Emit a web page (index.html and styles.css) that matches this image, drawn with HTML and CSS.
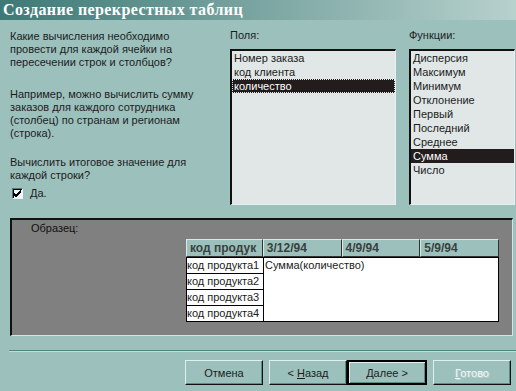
FILE: index.html
```html
<!DOCTYPE html>
<html lang="ru">
  <head>
    <meta charset="UTF-8">
    <link rel="stylesheet" href="styles.css">
    <title>Создание перекрестных таблиц</title>
  </head>
  <body>

    <div class="titleBar">Создание перекрестных таблиц</div>

    <div class="mainRow">
      <div class="textCol">
        <p class="para">Какие вычисления необходимо<br>провести для каждой ячейки на<br>пересечении строк и столбцов?</p>
        <p class="para second">Например, можно вычислить сумму<br>заказов для каждого сотрудника<br>(столбец) по странам и регионам<br>(строка).</p>
        <p class="para third">Вычислить итоговое значение для<br>каждой строки?</p>
        <div class="checkRow">
          <span class="checkBox">
            <svg width="9" height="9" viewBox="0 0 9 9"><path d="M1 4 L3 6 L8 1 M1 5 L3 7 L8 2 M1 6 L3 8 L8 3" stroke="#000" stroke-width="1" fill="none"/></svg>
          </span>
          <span>Да.</span>
        </div>
      </div>

      <div class="fieldsCol">
        <div class="label">Поля:</div>
        <div class="listBox">
          <div class="item">Номер заказа</div>
          <div class="item">код клиента</div>
          <div class="item selected focused">количество</div>
        </div>
      </div>

      <div class="funcCol">
        <div class="label">Функции:</div>
        <div class="listBox">
          <div class="item">Дисперсия</div>
          <div class="item">Максимум</div>
          <div class="item">Минимум</div>
          <div class="item">Отклонение</div>
          <div class="item">Первый</div>
          <div class="item">Последний</div>
          <div class="item">Среднее</div>
          <div class="item selected">Сумма</div>
          <div class="item">Число</div>
        </div>
      </div>
    </div>

    <div class="samplePanel">
      <div class="sampleLabel">Образец:</div>
      <div class="sampleTable">
        <div class="headRow">
          <div class="headCell first">код продук</div>
          <div class="headCell">3/12/94</div>
          <div class="headCell">4/9/94</div>
          <div class="headCell">5/9/94</div>
        </div>
        <div class="bodyPart">
          <div class="rowHeads">
            <div class="rowCell">код продукта1</div>
            <div class="rowCell">код продукта2</div>
            <div class="rowCell">код продукта3</div>
            <div class="rowCell">код продукта4</div>
          </div>
          <div class="dataArea">Сумма(количество)</div>
        </div>
      </div>
    </div>

    <div class="separator"></div>

    <div class="buttonRow">
      <button class="winButton">Отмена</button>
      <button class="winButton back">&lt; <u>Н</u>азад</button>
      <button class="winButton default"><u>Д</u>алее &gt;</button>
      <button class="winButton disabled"><u>Г</u>отово</button>
    </div>

  </body>
</html>
```

FILE: styles.css
```css
body {
  margin: 0;
  width: 516px;
  height: 391px;
  overflow: hidden;
  background: #9cc0bc;
  font-family: "Liberation Sans", Arial, sans-serif;
  font-size: 11px;
  color: #1c1c1c;
}

.titleBar {
  height: 20px;
  line-height: 19px;
  padding-left: 3px;
  background: linear-gradient(to right, #3d7976, #b7d1cd);
  color: #fff;
  font-family: "Liberation Serif", serif;
  font-weight: bold;
  font-size: 16px;
  letter-spacing: 0.4px;
  white-space: nowrap;
}

.mainRow {
  display: flex;
  padding-top: 9px;
  height: 176px;
}

.textCol {
  flex: none;
  width: 210px;
  padding-left: 10px;
  padding-right: 10px;
  padding-top: 1px;
}

.para {
  margin: 0;
  line-height: 13px;
}

.second {
  margin-top: 19px;
}

.third {
  margin-top: 16px;
}

.checkRow {
  display: flex;
  align-items: center;
  gap: 7px;
  margin-top: 5px;
  margin-left: 2px;
}

.checkBox {
  width: 9px;
  height: 9px;
  background: #f2f6f5;
  border-top: 1px solid #4d7b77;
  border-left: 1px solid #4d7b77;
  border-right: 1px solid #eef5f4;
  border-bottom: 1px solid #eef5f4;
  box-shadow: inset 1px 1px 0 #000;
  display: flex;
}

.fieldsCol {
  flex: none;
  width: 166px;
}

.funcCol {
  flex: none;
  width: 106px;
  margin-left: 13px;
}

.label {
  height: 13px;
  line-height: 13px;
  margin-bottom: 7px;
}

.listBox {
  height: 153px;
  box-sizing: border-box;
  height: 156px;
  background: #e0e7e6;
  border-top: 2px solid #111;
  border-left: 2px solid #111;
  border-right: 1px solid #e6efee;
  border-bottom: 1px solid #e6efee;
}

.item {
  height: 14px;
  line-height: 14px;
  padding-left: 2px;
  white-space: nowrap;
}

.selected {
  background: #231c1c;
  color: #fff;
}

.focused {
  outline: 1px dotted #e8e8e8;
  outline-offset: -1px;
}

.samplePanel {
  margin: 13px 3px 0 10px;
  height: 115px;
  background: #808080;
  border-top: 2px solid #111;
  border-left: 2px solid #111;
  border-right: 1px solid #d4e4e2;
  border-bottom: 1px solid #d4e4e2;
}

.sampleLabel {
  padding: 2px 0 0 19px;
  height: 13px;
  line-height: 13px;
  color: #111;
}

.sampleTable {
  margin: 4px 0 0 174px;
  width: 313px;
}

.headRow {
  display: flex;
  height: 18px;
}

.headCell {
  width: 75px;
  height: 16px;
  line-height: 16px;
  padding-left: 3px;
  background: #9cc0bc;
  border-top: 1px solid #d8e8e6;
  border-left: 1px solid #d8e8e6;
  border-right: 1px solid #333;
  border-bottom: 1px solid #333;
  font-weight: bold;
  font-size: 12px;
  color: #3a4040;
  overflow: hidden;
  white-space: nowrap;
}

.headCell.first {
  width: 73px;
}

.bodyPart {
  display: flex;
  background: #fff;
  border: 1px solid #000;
  height: 63px;
}

.rowHeads {
  width: 76px;
  border-right: 1px solid #000;
}

.rowCell {
  height: 15px;
  line-height: 15px;
  border-bottom: 1px solid #000;
  white-space: nowrap;
  overflow: hidden;
}

.rowCell:last-child {
  border-bottom: none;
}

.dataArea {
  flex: 1;
  line-height: 15px;
  padding-left: 1px;
}

.separator {
  margin: 14px 0 0 9px;
  height: 0;
  border-top: 1px solid #4e8783;
  border-bottom: 1px solid #c4dcd9;
}

.buttonRow {
  display: flex;
  justify-content: flex-end;
  padding: 8px 5px 0 0;
  gap: 6px;
}

.winButton {
  width: 78px;
  height: 25px;
  margin: 0;
  padding: 0;
  background: #9cc0bc;
  font-family: "Liberation Sans", Arial, sans-serif;
  font-size: 11px;
  color: #1c1c1c;
  border-top: 1px solid #e2eeed;
  border-left: 1px solid #e2eeed;
  border-right: 1px solid #111;
  border-bottom: 1px solid #111;
  box-shadow: inset -1px -1px 0 #5d8c88;
}

.back {
  margin-right: -6px;
}

.default {
  border: 2px solid #000;
  box-shadow: inset 1px 1px 0 #e2eeed, inset -1px -1px 0 #5d8c88;
  width: 80px;
}

.disabled {
  color: #f4f8f8;
  text-shadow: 1px 1px 0 #b8d3cf;
}
```
